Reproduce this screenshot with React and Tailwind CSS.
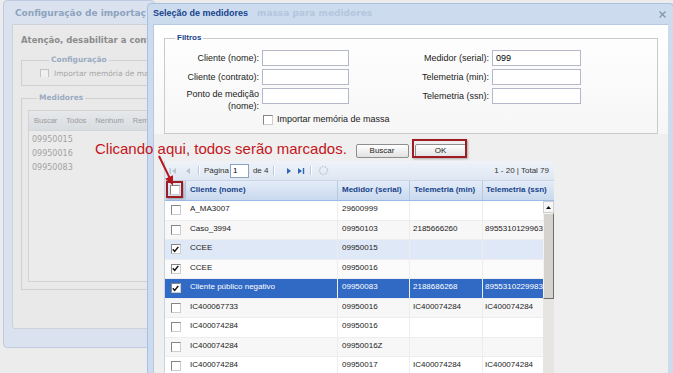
import React from "react";

const rows = [
  { nome: "A_MA3007", serial: "29600999", min: "", ssn: "", on: false, tone: "bg-white" },
  { nome: "Caso_3994", serial: "09950103", min: "2185666260", ssn: "8955310129963", on: false, tone: "bg-[#f7f7f7]" },
  { nome: "CCEE", serial: "09950015", min: "", ssn: "", on: true, tone: "bg-[#dfe8f6]" },
  { nome: "CCEE", serial: "09950016", min: "", ssn: "", on: true, tone: "bg-[#fbfbfb]" },
  { nome: "Cliente público negativo", serial: "09950083", min: "2188686268", ssn: "89553102299834", on: true, tone: "bg-[#316ac5]", sel: true },
  { nome: "IC400067733", serial: "09950016", min: "IC400074284", ssn: "IC400074284", on: false, tone: "bg-[#f7f7f7]" },
  { nome: "IC400074284", serial: "09950016", min: "", ssn: "", on: false, tone: "bg-white" },
  { nome: "IC400074284", serial: "09950016Z", min: "", ssn: "", on: false, tone: "bg-[#f7f7f7]" },
  { nome: "IC400074284", serial: "09950017", min: "IC400074284", ssn: "IC400074284", on: false, tone: "bg-white" },
];

// small XP style checkbox
const Box = ({ on, dim }) => (
  <span
    className={
      dim
        ? "flex h-[9px] w-[9px] shrink-0 items-center justify-center border border-[#c2c2c2] bg-[#f0f0f0]"
        : "flex h-[10px] w-[10px] shrink-0 items-center justify-center border border-[#858585] border-r-[#cdcdcd] border-b-[#cdcdcd] bg-white"
    }
  >
    {on && (
      <svg width="7" height="7" viewBox="0 0 7 7">
        <path d="M0.8 3.3 L2.7 5.4 L6.3 0.9" fill="none" stroke="#111" strokeWidth="1.5" />
      </svg>
    )}
  </span>
);

const Input = ({ w, value }) => (
  <div className={`${w} h-[16px] shrink-0 border border-[#b5b8c8] bg-white pl-[3px] text-[9px] leading-[14px] text-black`}>
    {value}
  </div>
);

const Sep = () => <span className="h-[14px] w-[2px] shrink-0 border-l border-[#b9c9de] border-r border-r-white" />;

// the window behind the dialog, only its left part is visible
const BackWindow = () => (
  <div className="absolute left-[3px] top-0 h-[348px] w-[152px] overflow-hidden rounded-[4px] border border-[#bccbe0] bg-[#d9e2ee] font-['DejaVu_Sans',sans-serif]">
    <div className="flex h-[23px] items-center overflow-hidden whitespace-nowrap pl-[11px] pt-[2px] text-[9px] font-bold text-[#8ea3be]">
      Configuração de importaç
    </div>
    <div className="ml-[8px] h-[305px] w-[200px] rounded-b-[3px] border border-[#cdd2d8] bg-[#e9e9e9] px-[8px] pt-[9px]">
      <p className="w-[128px] overflow-hidden whitespace-nowrap text-[8.5px] font-bold leading-[12px] text-[#8c8c8c]">
        Atenção, desabilitar a conf
      </p>
      <fieldset className="mt-[9px] border border-[#d0d0d0] pb-[8px] pl-[18px]">
        <legend className="ml-[9px] px-[2px] text-[7.5px] font-bold leading-[10px] text-[#9aabc2]">Configuração</legend>
        <div className="flex h-[12px] w-[108px] items-center gap-[5px] overflow-hidden pt-[5px] text-[7.5px] text-[#a6a6a6]">
          <Box dim />
          <span className="whitespace-nowrap">Importar memória de ma</span>
        </div>
      </fieldset>
      <fieldset className="mt-[7px] border border-[#d0d0d0] px-[6px] pb-[7px]">
        <legend className="ml-[9px] px-[2px] text-[7.5px] font-bold leading-[10px] text-[#9aabc2]">Medidores</legend>
        <div className="mt-[7px] h-[172px] border border-[#d2d2d2] bg-[#ebebeb]">
          <div className="flex h-[20px] w-[118px] items-center gap-[9px] overflow-hidden border-b border-[#d3d6da] bg-gradient-to-b from-[#e6e8eb] to-[#d9dce0] pl-[5px] font-['Liberation_Sans',sans-serif] text-[7.5px] text-[#9b9b9b]">
            <span>Buscar</span>
            <span>Todos</span>
            <span>Nenhum</span>
            <span>Rem</span>
          </div>
          <div className="pl-[3px] pt-[2px] text-[8px] leading-[14px] text-[#a3a3a3]">
            <div>09950015</div>
            <div>09950016</div>
            <div>09950083</div>
          </div>
        </div>
      </fieldset>
    </div>
  </div>
);

const Pager = () => (
  <div className="flex h-[20px] items-center border-b border-[#c9d6e8] bg-gradient-to-b from-[#eef3f9] to-[#dfe7f2] text-[8px] text-[#333]">
    <svg className="ml-[4px] shrink-0" width="8" height="8" viewBox="0 0 8 8">
      <rect x="0.5" y="1" width="1.3" height="6" fill="#b9c3cf" />
      <path d="M7 1 L3 4 L7 7 Z" fill="#b9c3cf" />
    </svg>
    <svg className="ml-[7px] shrink-0" width="8" height="8" viewBox="0 0 8 8">
      <path d="M6 1 L2 4 L6 7 Z" fill="#b9c3cf" />
    </svg>
    <span className="ml-[6px]">
      <Sep />
    </span>
    <span className="ml-[4px]">Página</span>
    <div className="ml-[1px] h-[14px] w-[19px] border border-[#8aa2c4] bg-white pl-[2px] leading-[12px] text-black">1</div>
    <span className="ml-[4px]">de 4</span>
    <span className="ml-[4px]">
      <Sep />
    </span>
    <svg className="ml-[10px] shrink-0" width="8" height="8" viewBox="0 0 8 8">
      <path d="M2 1 L6 4 L2 7 Z" fill="#2f66b3" />
    </svg>
    <svg className="ml-[4px] shrink-0" width="8" height="8" viewBox="0 0 8 8">
      <path d="M1 1 L5 4 L1 7 Z" fill="#2f66b3" />
      <rect x="5.8" y="1" width="1.4" height="6" fill="#2f66b3" />
    </svg>
    <span className="ml-[5px]">
      <Sep />
    </span>
    <svg className="ml-[6px] shrink-0" width="11" height="11" viewBox="0 0 11 11">
      <circle cx="5.5" cy="5.5" r="4" fill="none" stroke="#c2cad4" strokeWidth="1.6" strokeDasharray="1.6 1.2" />
    </svg>
    <span className="ml-auto pr-[5px]">1 - 20 | Total 79</span>
  </div>
);

const Grid = () => (
  <div className="mt-[3px] w-[390px] overflow-hidden border-l border-[#c5d3e6] bg-white">
    <Pager />
    <div className="flex h-[20px] border-b border-[#99bbe8] bg-gradient-to-b from-[#e4ecf7] to-[#c9d9ee] text-[8px] font-bold leading-[9px] text-[#15428b]">
      <div className="flex w-[21px] shrink-0 justify-center border-r border-[#b6cae4] pt-[4px]">
        <Box />
      </div>
      <div className="w-[152px] shrink-0 border-r border-[#b6cae4] pl-[4px] pt-[4px]">Cliente (nome)</div>
      <div className="w-[72px] shrink-0 border-r border-[#b6cae4] pl-[4px] pt-[4px] whitespace-nowrap">Medidor (serial)</div>
      <div className="w-[73px] shrink-0 border-r border-[#b6cae4] pl-[4px] pt-[4px] whitespace-nowrap">Telemetria (min)</div>
      <div className="flex-1 pl-[3px] pt-[4px] whitespace-nowrap">Telemetria (ssn)</div>
    </div>
    <div className="flex">
      <div className="w-[378px] shrink-0">
        {rows.map((r, i) => (
          <div
            key={i}
            className={`flex h-[19.5px] border-b border-[#ededed] text-[8px] leading-[9px] ${r.tone} ${r.sel ? "text-white" : "text-[#222]"}`}
          >
            <div className="flex w-[21px] shrink-0 justify-center pt-[4px]">
              <Box on={r.on} />
            </div>
            <div className="w-[152px] shrink-0 overflow-hidden whitespace-nowrap border-r border-[#ededed] pl-[4px] pt-[3px]">{r.nome}</div>
            <div className="w-[72px] shrink-0 overflow-hidden whitespace-nowrap border-r border-[#ededed] pl-[4px] pt-[3px]">{r.serial}</div>
            <div className="w-[73px] shrink-0 overflow-hidden whitespace-nowrap border-r border-[#ededed] pl-[3px] pt-[3px]">{r.min}</div>
            <div className="flex-1 overflow-hidden whitespace-nowrap pl-[2px] pt-[3px]">{r.ssn}</div>
          </div>
        ))}
      </div>
      {/* scrollbar */}
      <div className="flex w-[11px] shrink-0 flex-col bg-[#e6e5e2]">
        <div className="flex h-[12px] items-center justify-center border border-[#cfcfcf] bg-[#f7f7f7]">
          <svg width="5" height="3" viewBox="0 0 5 3">
            <path d="M0 3 L2.5 0 L5 3 Z" fill="#111" />
          </svg>
        </div>
        <div className="h-[86px] border border-[#f4f3f1] border-r-[#6e6e6e] border-b-[#6e6e6e] bg-[#d6d3ce]" />
      </div>
    </div>
  </div>
);

const Dialog = () => (
  <div className="absolute left-[147px] top-[3px] flex h-[390px] w-[527px] flex-col rounded-t-[4px] border border-[#a9c0de] bg-[#cddbee] px-[5px]">
    <div className="flex h-[20px] shrink-0 items-center whitespace-nowrap text-[9px] font-bold">
      <span className="text-[#15428b]">Seleção de medidores</span>
      <span className="ml-[9px] font-['DejaVu_Sans',sans-serif] text-[#b4c6dd]">massa para medidores</span>
      <svg className="ml-auto mr-[2px]" width="7" height="7" viewBox="0 0 7 7">
        <path d="M0.5 0.5 L6.5 6.5 M6.5 0.5 L0.5 6.5" stroke="#8193ad" strokeWidth="1.2" />
      </svg>
    </div>
    <div className="flex-1 border-t border-l border-[#b7c9e2] bg-[#efefef]">
      <div className="bg-gradient-to-b from-white to-[#f6f6f6] px-[10px] pt-[8px]">
        <fieldset className="border border-[#cacaca] pb-[7px] text-[9px] text-[#222]">
          <legend className="ml-[10px] px-[2px] text-[8px] font-bold leading-[10px] text-[#15428b]">Filtros</legend>
          <div className="flex flex-col gap-[3px] pt-[7px]">
            <div className="flex h-[16px] leading-[16px]">
              <span className="w-[97px] shrink-0 pr-[3px] text-right">Cliente (nome):</span>
              <Input w="w-[87px]" />
              <span className="w-[143px] shrink-0 pr-[3px] text-right">Medidor (serial):</span>
              <Input w="w-[89px]" value="099" />
            </div>
            <div className="flex h-[16px] leading-[16px]">
              <span className="w-[97px] shrink-0 pr-[3px] text-right">Cliente (contrato):</span>
              <Input w="w-[87px]" />
              <span className="w-[143px] shrink-0 pr-[3px] text-right">Telemetria (min):</span>
              <Input w="w-[89px]" />
            </div>
            <div className="flex h-[24px]">
              <span className="w-[97px] shrink-0 pr-[3px] text-right leading-[12px]">
                Ponto de medição
                <br />
                (nome):
              </span>
              <Input w="w-[87px]" />
              <span className="w-[143px] shrink-0 pr-[3px] text-right leading-[16px]">Telemetria (ssn):</span>
              <Input w="w-[89px]" />
            </div>
            <div className="-mt-[1px] flex h-[12px] items-center gap-[4px] pl-[98px]">
              <Box />
              <span>Importar memória de massa</span>
            </div>
          </div>
        </fieldset>
      </div>
      <div className="px-[10px]">
        <div className="mt-[10px] flex justify-center gap-[6px] text-[8px] text-[#222]">
          <button className="h-[14px] w-[53px] rounded-[2px] border border-[#8e8e8e] bg-gradient-to-b from-white to-[#e2e2e2] leading-[12px]">
            Buscar
          </button>
          <button className="h-[14px] w-[52px] rounded-[2px] border border-[#8e8e8e] bg-gradient-to-b from-white to-[#e2e2e2] leading-[12px]">
            OK
          </button>
        </div>
        <Grid />
      </div>
    </div>
  </div>
);

export default function App() {
  return (
    <div className="relative h-[373px] w-[673px] overflow-hidden bg-[#ececec] font-['Liberation_Sans',Arial,sans-serif]">
      <BackWindow />
      <Dialog />

      {/* annotation overlay */}
      <div className="absolute left-[95px] top-[141px] whitespace-nowrap text-[15px] leading-[15px] text-[#c3161c]">
        Clicando aqui, todos serão marcados.
      </div>
      <svg className="absolute left-[150px] top-[150px]" width="30" height="40" viewBox="0 0 30 40">
        <path d="M9 6 L19.4 27.4" stroke="#b8141a" strokeWidth="2" />
        <path d="M23 35.5 L15.2 28.8 L23 25.2 Z" fill="#b8141a" />
      </svg>
      <div className="absolute left-[166px] top-[181px] h-[17px] w-[17px] border-2 border-[#9e1c22] shadow-[1px_1px_2px_rgba(0,0,0,0.3)]" />
      <div className="absolute left-[412px] top-[139px] h-[19px] w-[55px] border-2 border-[#9e1c22] shadow-[1px_1px_2px_rgba(0,0,0,0.3)]" />
    </div>
  );
}
